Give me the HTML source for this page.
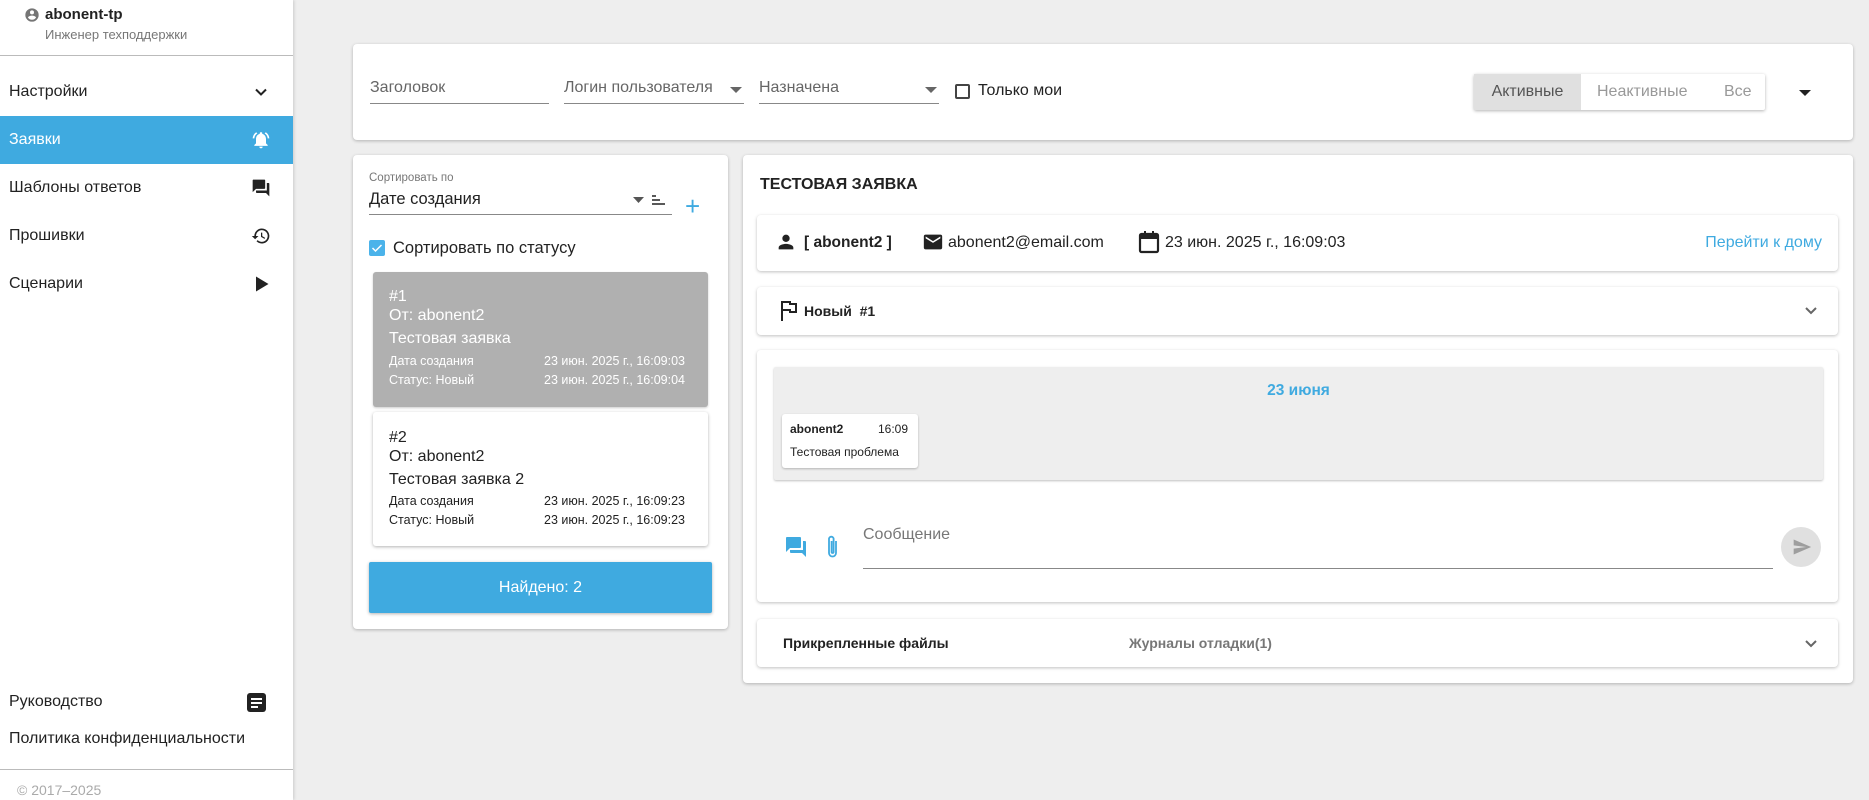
<!DOCTYPE html>
<html><head><meta charset="utf-8"><style>
*{box-sizing:border-box;margin:0;padding:0}
body{width:1869px;height:800px;overflow:hidden;background:#eeeeee;font-family:"Liberation Sans","DejaVu Sans",sans-serif;color:#222;position:relative}
.a{position:absolute}
.card{position:absolute;background:#fff;border-radius:4px;box-shadow:0 1px 3px rgba(0,0,0,.25)}
.side{position:absolute;left:0;top:0;width:293px;height:800px;background:#fff;box-shadow:1px 0 3px rgba(0,0,0,.15)}
.mi{position:absolute;left:0;width:293px;height:48px;line-height:48px;padding-left:9px;font-size:16px;color:#222}
.mi svg{position:absolute;right:22px;top:14px}
.fld{position:absolute;border-bottom:1px solid #888;font-size:16px;color:#666;height:30px;padding-top:5px}
.small{font-size:12.5px}
</style></head><body>
<div class="side">
 <svg class="a" style="left:24px;top:7px" width="16" height="16" viewBox="0 0 24 24"><path fill="#757575" d="M12 2a10 10 0 100 20 10 10 0 000-20zm0 3a3 3 0 110 6 3 3 0 010-6zm0 14.2a7.2 7.2 0 01-6-3.2c0-2 4-3.1 6-3.1s6 1.1 6 3.1a7.2 7.2 0 01-6 3.2z"/></svg>
 <div class="a" style="left:45px;top:6px;font-size:15px;font-weight:bold;color:#222">abonent-tp</div>
 <div class="a" style="left:45px;top:27px;font-size:13px;color:#777">Инженер техподдержки</div>
 <div class="a" style="left:0;top:55px;width:293px;border-top:1px solid #bbb"></div>
 <div class="mi" style="top:68px">Настройки<svg width="20" height="20" viewBox="0 0 24 24"><path fill="none" stroke="#222" stroke-width="2.4" d="M6 9l6 6 6-6"/></svg></div>
 <div class="mi" style="top:116px;background:#3faae0;color:#fff">Заявки<svg width="20" height="20" viewBox="0 0 24 24"><path fill="#fff" d="M12 22a2 2 0 002-2h-4a2 2 0 002 2zm6-6v-5c0-3-1.6-5.6-4.5-6.3V4a1.5 1.5 0 00-3 0v.7C7.6 5.4 6 8 6 11v5l-2 2v1h16v-1zM7.6 4.1L6.2 2.7A10 10 0 002 10h2a8 8 0 013.6-5.9zM20 10h2a10 10 0 00-4.2-7.3l-1.4 1.4A8 8 0 0120 10z"/></svg></div>
 <div class="mi" style="top:164px">Шаблоны ответов<svg width="20" height="20" viewBox="0 0 24 24"><path fill="#222" d="M21 6h-2v9H6v2c0 .6.4 1 1 1h11l4 4V7c0-.6-.4-1-1-1zm-4 6V3c0-.6-.4-1-1-1H3c-.6 0-1 .4-1 1v14l4-4h10c.6 0 1-.4 1-1z"/></svg></div>
 <div class="mi" style="top:212px">Прошивки<svg width="20" height="20" viewBox="0 0 24 24"><path fill="#222" d="M13 3a9 9 0 00-9 9H1l3.9 3.9L9 12H6a7 7 0 112 4.9l-1.4 1.4A9 9 0 1013 3zm-1 5v5l4.3 2.5.7-1.2-3.5-2.1V8z"/></svg></div>
 <div class="mi" style="top:260px">Сценарии<svg width="20" height="20" viewBox="0 0 24 24"><path fill="#222" d="M6 3v18l15-9z"/></svg></div>
 <div class="a" style="left:9px;top:693px;font-size:16px">Руководство</div>
 <svg class="a" style="left:247px;top:693px" width="20" height="20" viewBox="0 0 20 20"><rect width="19" height="19" rx="3" fill="#222"/><path stroke="#fff" stroke-width="2" d="M4 6h11M4 10h11M4 14h7"/></svg>
 <div class="a" style="left:9px;top:730px;font-size:16px">Политика конфиденциальности</div>
 <div class="a" style="left:0;top:769px;width:293px;border-top:1px solid #bbb"></div>
 <div class="a" style="left:17px;top:782px;font-size:14px;color:#aaa">© 2017–2025</div>
</div>

<div class="card" style="left:353px;top:44px;width:1500px;height:96px">
 <div class="fld" style="left:17px;top:30px;width:179px">Заголовок</div>
 <div class="fld" style="left:211px;top:30px;width:180px">Логин пользователя<svg class="a" style="right:2px;top:13px" width="12" height="8"><path d="M0 0h12L6 6z" fill="#666"/></svg></div>
 <div class="fld" style="left:406px;top:30px;width:180px">Назначена<svg class="a" style="right:2px;top:13px" width="12" height="8"><path d="M0 0h12L6 6z" fill="#666"/></svg></div>
 <div class="a" style="left:602px;top:40px;width:15px;height:15px;border:2px solid #444;border-radius:2px"></div>
 <div class="a" style="left:625px;top:38px;font-size:16px">Только мои</div>
 <div class="a" style="left:1121px;top:30px;width:291px;height:36px;box-shadow:0 1px 3px rgba(0,0,0,.3);border-radius:2px;background:#fff;font-size:16px;line-height:36px">
  <div class="a" style="left:0;top:0;width:107px;height:36px;background:#e0e0e0;color:#555;text-align:center">Активные</div>
  <div class="a" style="left:123px;top:0;color:#999">Неактивные</div>
  <div class="a" style="left:250px;top:0;color:#999">Все</div>
 </div>
 <svg class="a" style="left:1446px;top:46px" width="12" height="7"><path d="M0 0h12L6 6z" fill="#222"/></svg>
</div>

<div class="card" style="left:353px;top:155px;width:375px;height:474px">
 <div class="a small" style="left:16px;top:17px;font-size:11.5px;color:#777">Сортировать по</div>
 <div class="a" style="left:16px;top:35px;width:303px;height:25px;border-bottom:1px solid #888;font-size:16.5px;color:#222">Дате создания
  <svg class="a" style="left:264px;top:7px" width="11" height="6"><path d="M0 0h11L5.5 6z" fill="#555"/></svg>
  <svg class="a" style="left:283px;top:5px" width="13" height="10"><path stroke="#222" stroke-width="1.4" d="M0 1h4M0 5h8M0 9h13"/></svg>
 </div>
 <div class="a" style="left:332px;top:38px;font-size:26px;color:#3faae0;line-height:26px">+</div>
 <div class="a" style="left:16px;top:85px;width:16px;height:16px;background:#4bb3ea;border-radius:2px"><svg width="16" height="16"><path d="M3.5 8l3 3 6-6" stroke="#fff" stroke-width="1.5" fill="none"/></svg></div>
 <div class="a" style="left:40px;top:84px;font-size:16.5px">Сортировать по статусу</div>
 <div class="a" style="left:20px;top:117px;width:335px;height:135px;background:#b0b0b0;border-radius:3px;color:#fff;box-shadow:0 1px 2px rgba(0,0,0,.2)">
  <div class="a" style="left:16px;top:16px;font-size:16px">#1</div>
  <div class="a" style="left:16px;top:35px;font-size:16px">От: abonent2</div>
  <div class="a" style="left:16px;top:58px;font-size:16px">Тестовая заявка</div>
  <div class="a small" style="left:16px;top:82px">Дата создания</div><div class="a small" style="left:171px;top:82px">23 июн. 2025 г., 16:09:03</div>
  <div class="a small" style="left:16px;top:101px">Статус: Новый</div><div class="a small" style="left:171px;top:101px">23 июн. 2025 г., 16:09:04</div>
 </div>
 <div class="a" style="left:20px;top:257px;width:335px;height:134px;background:#fff;border-radius:3px;box-shadow:0 1px 3px rgba(0,0,0,.3)">
  <div class="a" style="left:16px;top:17px;font-size:16px">#2</div>
  <div class="a" style="left:16px;top:36px;font-size:16px">От: abonent2</div>
  <div class="a" style="left:16px;top:59px;font-size:16px">Тестовая заявка 2</div>
  <div class="a small" style="left:16px;top:82px">Дата создания</div><div class="a small" style="left:171px;top:82px">23 июн. 2025 г., 16:09:23</div>
  <div class="a small" style="left:16px;top:101px">Статус: Новый</div><div class="a small" style="left:171px;top:101px">23 июн. 2025 г., 16:09:23</div>
 </div>
 <div class="a" style="left:16px;top:407px;width:343px;height:51px;background:#3faae0;border-radius:2px;color:#fff;font-size:16px;line-height:51px;text-align:center;box-shadow:0 1px 3px rgba(0,0,0,.3)">Найдено: 2</div>
</div>

<div class="card" style="left:743px;top:155px;width:1110px;height:528px">
 <div class="a" style="left:17px;top:21px;font-size:16px;font-weight:bold;color:#222">ТЕСТОВАЯ ЗАЯВКА</div>
 <div class="card" style="left:14px;top:60px;width:1081px;height:56px">
  <svg class="a" style="left:18px;top:16px" width="22" height="22" viewBox="0 0 24 24"><path fill="#222" d="M12 12a4 4 0 100-8 4 4 0 000 8zm0 2c-2.7 0-8 1.3-8 4v2h16v-2c0-2.7-5.3-4-8-4z"/></svg>
  <div class="a" style="left:47px;top:19px;font-size:15.5px;font-weight:bold">[ abonent2 ]</div>
  <svg class="a" style="left:165px;top:16px" width="22" height="22" viewBox="0 0 24 24"><path fill="#222" d="M20 4H4a2 2 0 00-2 2v12a2 2 0 002 2h16a2 2 0 002-2V6a2 2 0 00-2-2zm0 4l-8 5-8-5V6l8 5 8-5z"/></svg>
  <div class="a" style="left:191px;top:19px;font-size:16px">abonent2@email.com</div>
  <svg class="a" style="left:381px;top:15px" width="22" height="24" viewBox="0 0 22 24"><rect x="2" y="4" width="18" height="18" rx="1.5" fill="none" stroke="#222" stroke-width="2.2"/><path fill="#222" d="M2 4h18v5H2zM6 1h2v4H6zM14 1h2v4h-2z"/></svg>
  <div class="a" style="left:408px;top:19px;font-size:16px">23 июн. 2025 г., 16:09:03</div>
  <div class="a" style="right:16px;top:19px;font-size:16px;color:#3faae0">Перейти к дому</div>
 </div>
 <div class="card" style="left:14px;top:132px;width:1081px;height:48px">
  <svg class="a" style="left:23px;top:13px" width="20" height="22" viewBox="0 0 20 22"><path fill="none" stroke="#222" stroke-width="2" d="M2 21V2h8v2h6v8h-6v-2H3"/></svg>
  <div class="a" style="left:47px;top:16px;font-size:14px;font-weight:bold">Новый&nbsp;&nbsp;#1</div>
  <svg class="a" style="right:20px;top:19px" width="14" height="10" viewBox="0 0 14 10"><path fill="none" stroke="#666" stroke-width="2" d="M2 2l5 5 5-5"/></svg>
 </div>
 <div class="card" style="left:14px;top:195px;width:1081px;height:252px">
  <div class="a" style="left:17px;top:17px;width:1049px;height:113px;background:#eeeeee;box-shadow:0 1px 2px rgba(0,0,0,.25);border-radius:2px">
   <div class="a" style="left:0;width:100%;top:15px;text-align:center;font-size:15.5px;font-weight:bold;color:#3faae0">23 июня</div>
   <div class="a" style="left:8px;top:47px;width:136px;height:54px;background:#fff;border-radius:3px;box-shadow:0 1px 2px rgba(0,0,0,.25)">
    <div class="a" style="left:8px;top:8px;font-size:12px;font-weight:bold">abonent2</div>
    <div class="a" style="left:96px;top:8px;font-size:12px">16:09</div>
    <div class="a" style="left:8px;top:31px;font-size:12px">Тестовая проблема</div>
   </div>
  </div>
  <svg class="a" style="left:27px;top:185px" width="24" height="24" viewBox="0 0 24 24"><path fill="#3faae0" d="M21 6h-2v9H6v2c0 .6.4 1 1 1h11l4 4V7c0-.6-.4-1-1-1zm-4 6V3c0-.6-.4-1-1-1H3c-.6 0-1 .4-1 1v14l4-4h10c.6 0 1-.4 1-1z"/></svg>
  <svg class="a" style="left:69px;top:184px" width="14" height="26" viewBox="0 0 14 26"><path fill="none" stroke="#3faae0" stroke-width="1.8" d="M10 7v12a3.5 3.5 0 01-7 0V5a2.3 2.3 0 014.6 0v13a1 1 0 01-2 0V7"/></svg>
  <div class="a" style="left:106px;top:176px;width:910px;height:43px;border-bottom:1px solid #888;font-size:16px;color:#777">Сообщение</div>
  <div class="a" style="left:1024px;top:177px;width:40px;height:40px;border-radius:50%;background:#e0e0e0"></div>
  <svg class="a" style="left:1034px;top:187px" width="22" height="20" viewBox="0 0 24 24"><path fill="#9e9e9e" d="M2 21l21-9L2 3v7l15 2-15 2z"/></svg>
 </div>
 <div class="card" style="left:14px;top:464px;width:1081px;height:48px">
  <div class="a" style="left:26px;top:16px;font-size:14px;font-weight:bold">Прикрепленные файлы</div>
  <div class="a" style="left:372px;top:16px;font-size:14px;font-weight:bold;color:#777">Журналы отладки(1)</div>
  <svg class="a" style="right:20px;top:20px" width="14" height="10" viewBox="0 0 14 10"><path fill="none" stroke="#666" stroke-width="2" d="M2 2l5 5 5-5"/></svg>
 </div>
</div>
</body></html>
